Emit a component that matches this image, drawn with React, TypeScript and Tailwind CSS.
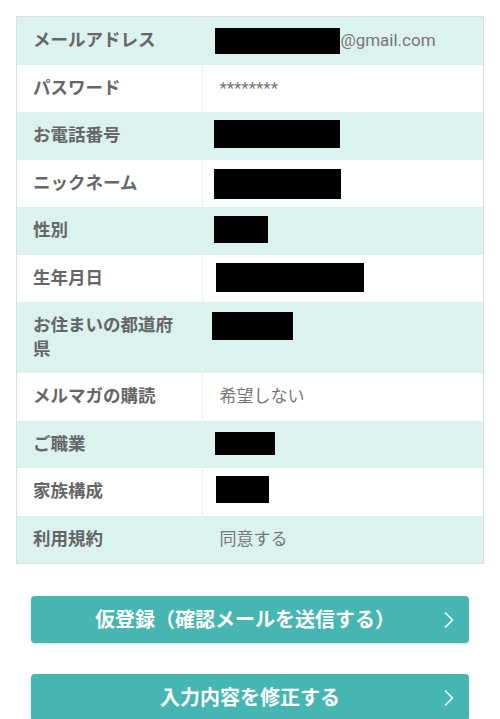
import React from 'react';

type Row = {
    label: string;
    text?: string;
    box?: { w: number; h: number; top: number; left: number };
    suffix?: string;
};

const rows: Row[] = [
    { label: 'メールアドレス', box: { w: 125, h: 26, top: 11, left: 12 }, suffix: '@gmail.com' },
    { label: 'パスワード', text: '********' },
    { label: 'お電話番号', box: { w: 126, h: 28, top: 8, left: 11 } },
    { label: 'ニックネーム', box: { w: 127, h: 30, top: 9, left: 11 } },
    { label: '性別', box: { w: 54, h: 27, top: 9, left: 11 } },
    { label: '生年月日', box: { w: 148, h: 29, top: 8, left: 13 } },
    { label: 'お住まいの都道府県', box: { w: 81, h: 28, top: 10, left: 9 } },
    { label: 'メルマガの購読', text: '希望しない' },
    { label: 'ご職業', box: { w: 60, h: 23, top: 11, left: 12 } },
    { label: '家族構成', box: { w: 53, h: 27, top: 8, left: 13 } },
    { label: '利用規約', text: '同意する' },
];

function Chevron() {
    return (
        <svg width="10" height="16" viewBox="0 0 10 16" fill="none" className="shrink-0">
            <path d="M1.5 1 L8.5 8 L1.5 15" stroke="white" strokeWidth="1.6" strokeLinecap="round" strokeLinejoin="round" />
        </svg>
    );
}

function ActionButton({ label, shift }: { label: string; shift?: boolean }) {
    return (
        <button className="relative flex h-[47px] w-full items-center justify-center rounded-[4px] bg-[#45b6b2] shadow-[0_1px_2px_rgba(0,0,0,0.15)]">
            <span className={'text-[20px] font-bold leading-none text-white' + (shift ? ' -ml-[10px]' : '')}>{label}</span>
            <span className="absolute right-[15px] top-1/2 -translate-y-1/2">
                <Chevron />
            </span>
        </button>
    );
}

export default function App() {
    return (
        <div
            className="min-h-[719px] bg-white px-4 pt-4"
            style={{ fontFamily: 'Roboto, "Noto Sans CJK JP", sans-serif' }}
        >
            <div className="border border-[#dcdfdf]">
                {rows.map((row, i) => (
                    <div key={row.label} className={'flex ' + (i % 2 === 0 ? 'bg-[#dcf2ef]' : 'bg-white')}>
                        <div className="w-[40%] shrink-0 border-r border-[#eaf2f1] px-4 py-3 text-[17.5px] font-bold leading-[23.5px] text-[#666]">
                            {row.label}
                        </div>
                        <div className="flex-1 px-4">
                            {row.box ? (
                                <div className="flex items-start">
                                    <div
                                        className="shrink-0 bg-black"
                                        style={{
                                            width: row.box.w,
                                            height: row.box.h,
                                            marginTop: row.box.top,
                                            marginLeft: row.box.left - 16,
                                        }}
                                    />
                                    {row.suffix && (
                                        <span className="pt-3 text-[17px] leading-[23.5px] text-[#777]">{row.suffix}</span>
                                    )}
                                </div>
                            ) : (
                                <div className="py-3 text-[17px] leading-[23.5px] text-[#777]">{row.text}</div>
                            )}
                        </div>
                    </div>
                ))}
            </div>

            <div className="mt-8 flex flex-col gap-[31px] px-[15px]">
                <ActionButton label="仮登録（確認メールを送信する）" shift />
                <ActionButton label="入力内容を修正する" />
            </div>
        </div>
    );
}
